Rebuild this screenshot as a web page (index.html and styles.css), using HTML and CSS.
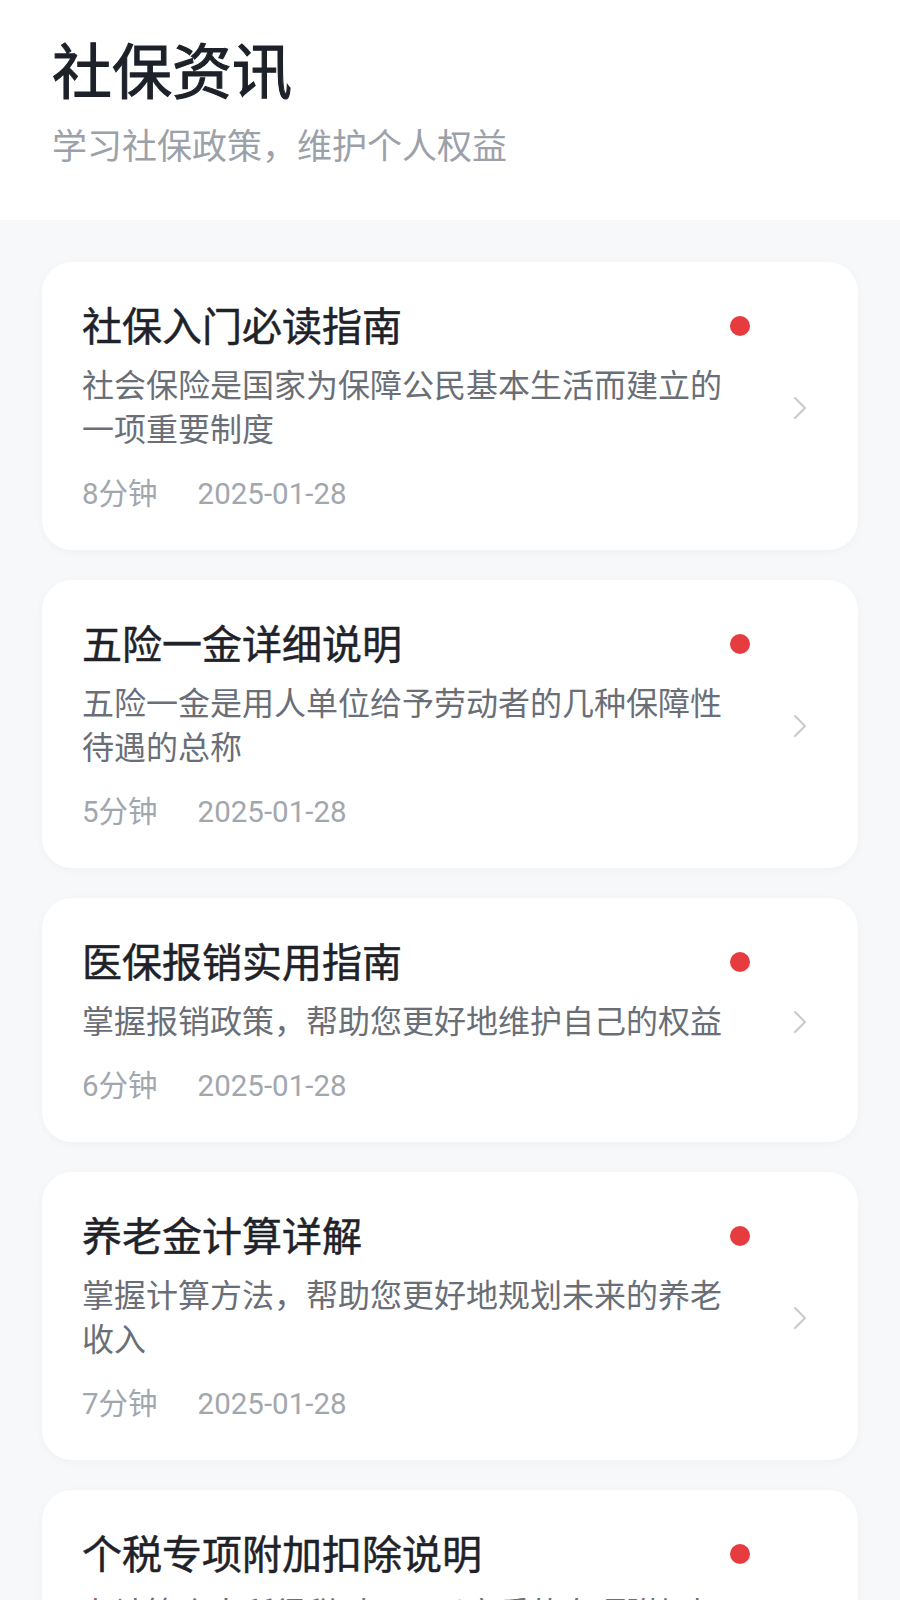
FILE: index.html
```html
<!DOCTYPE html>
<html lang="zh-CN">
<head>
<meta charset="utf-8">
<title>社保资讯</title>
<link rel="stylesheet" href="styles.css">
</head>
<body>
<header class="page-header">
  <h1 class="page-title">社保资讯</h1>
  <p class="page-subtitle">学习社保政策，维护个人权益</p>
</header>
<main class="card-list">
  <article class="card">
    <div class="card-body">
      <div class="card-head">
        <h2 class="card-title">社保入门必读指南</h2>
        <span class="dot"></span>
      </div>
      <p class="card-desc">社会保险是国家为保障公民基本生活而建立的一项重要制度</p>
      <div class="card-meta"><span>8分钟</span><span>2025-01-28</span></div>
    </div>
    <svg class="chevron" viewBox="0 0 14 24" width="14" height="24"><polyline points="2,2 12,12 2,22" fill="none" stroke="#c6c9ce" stroke-width="2" stroke-linecap="round" stroke-linejoin="round"/></svg>
  </article>
  <article class="card">
    <div class="card-body">
      <div class="card-head">
        <h2 class="card-title">五险一金详细说明</h2>
        <span class="dot"></span>
      </div>
      <p class="card-desc">五险一金是用人单位给予劳动者的几种保障性待遇的总称</p>
      <div class="card-meta"><span>5分钟</span><span>2025-01-28</span></div>
    </div>
    <svg class="chevron" viewBox="0 0 14 24" width="14" height="24"><polyline points="2,2 12,12 2,22" fill="none" stroke="#c6c9ce" stroke-width="2" stroke-linecap="round" stroke-linejoin="round"/></svg>
  </article>
  <article class="card">
    <div class="card-body">
      <div class="card-head">
        <h2 class="card-title">医保报销实用指南</h2>
        <span class="dot"></span>
      </div>
      <p class="card-desc">掌握报销政策，帮助您更好地维护自己的权益</p>
      <div class="card-meta"><span>6分钟</span><span>2025-01-28</span></div>
    </div>
    <svg class="chevron" viewBox="0 0 14 24" width="14" height="24"><polyline points="2,2 12,12 2,22" fill="none" stroke="#c6c9ce" stroke-width="2" stroke-linecap="round" stroke-linejoin="round"/></svg>
  </article>
  <article class="card">
    <div class="card-body">
      <div class="card-head">
        <h2 class="card-title">养老金计算详解</h2>
        <span class="dot"></span>
      </div>
      <p class="card-desc">掌握计算方法，帮助您更好地规划未来的养老收入</p>
      <div class="card-meta"><span>7分钟</span><span>2025-01-28</span></div>
    </div>
    <svg class="chevron" viewBox="0 0 14 24" width="14" height="24"><polyline points="2,2 12,12 2,22" fill="none" stroke="#c6c9ce" stroke-width="2" stroke-linecap="round" stroke-linejoin="round"/></svg>
  </article>
  <article class="card">
    <div class="card-body">
      <div class="card-head">
        <h2 class="card-title">个税专项附加扣除说明</h2>
        <span class="dot"></span>
      </div>
      <p class="card-desc">在计算个人所得税时，可以享受的专项附加扣除政策</p>
      <div class="card-meta"><span>6分钟</span><span>2025-01-28</span></div>
    </div>
    <svg class="chevron" viewBox="0 0 14 24" width="14" height="24"><polyline points="2,2 12,12 2,22" fill="none" stroke="#c6c9ce" stroke-width="2" stroke-linecap="round" stroke-linejoin="round"/></svg>
  </article>
</main>
</body>
</html>
```

FILE: styles.css
```css
* {
  box-sizing: border-box;
}

html, body {
  margin: 0;
  padding: 0;
}

body {
  background: #f7f8fa;
  font-family: Roboto, "Noto Sans CJK SC", sans-serif;
  color: #1f2329;
}

.page-header {
  background: #ffffff;
  padding: 38px 52px 49px;
}

.page-title {
  margin: 0;
  font-size: 60px;
  line-height: 72px;
  font-weight: 400;
  -webkit-text-stroke: 1.1px #1d2129;
  color: #1d2129;
}

.page-subtitle {
  margin: 15px 0 0;
  font-size: 35px;
  line-height: 46px;
  color: #9ca1a9;
}

.card-list {
  display: flex;
  flex-direction: column;
  gap: 30px;
  padding: 42px 42px 40px;
}

.card {
  display: flex;
  align-items: center;
  background: #ffffff;
  border-radius: 30px;
  padding: 40px 51px 36px 40px;
  box-shadow: 0 2px 10px rgba(30, 40, 60, 0.035);
}

.card-body {
  flex: 1;
  min-width: 0;
}

.card-head {
  display: flex;
  align-items: center;
  justify-content: space-between;
}

.card-title {
  margin: 0;
  font-size: 40px;
  line-height: 52px;
  font-weight: 400;
  -webkit-text-stroke: 0.5px #1f2329;
  color: #1f2329;
}

.dot {
  width: 20px;
  height: 20px;
  border-radius: 50%;
  background: #e63b3f;
  flex: none;
  margin-top: -4px;
}

.card-desc {
  margin: 10px 0 0;
  font-size: 32px;
  line-height: 44px;
  color: #6a6f77;
}

.card-meta {
  margin-top: 22px;
  display: flex;
  gap: 40px;
  font-size: 29.5px;
  line-height: 40px;
  color: #a2a7ae;
}

.chevron {
  flex: none;
  margin-left: 43px;
  display: block;
}
```
